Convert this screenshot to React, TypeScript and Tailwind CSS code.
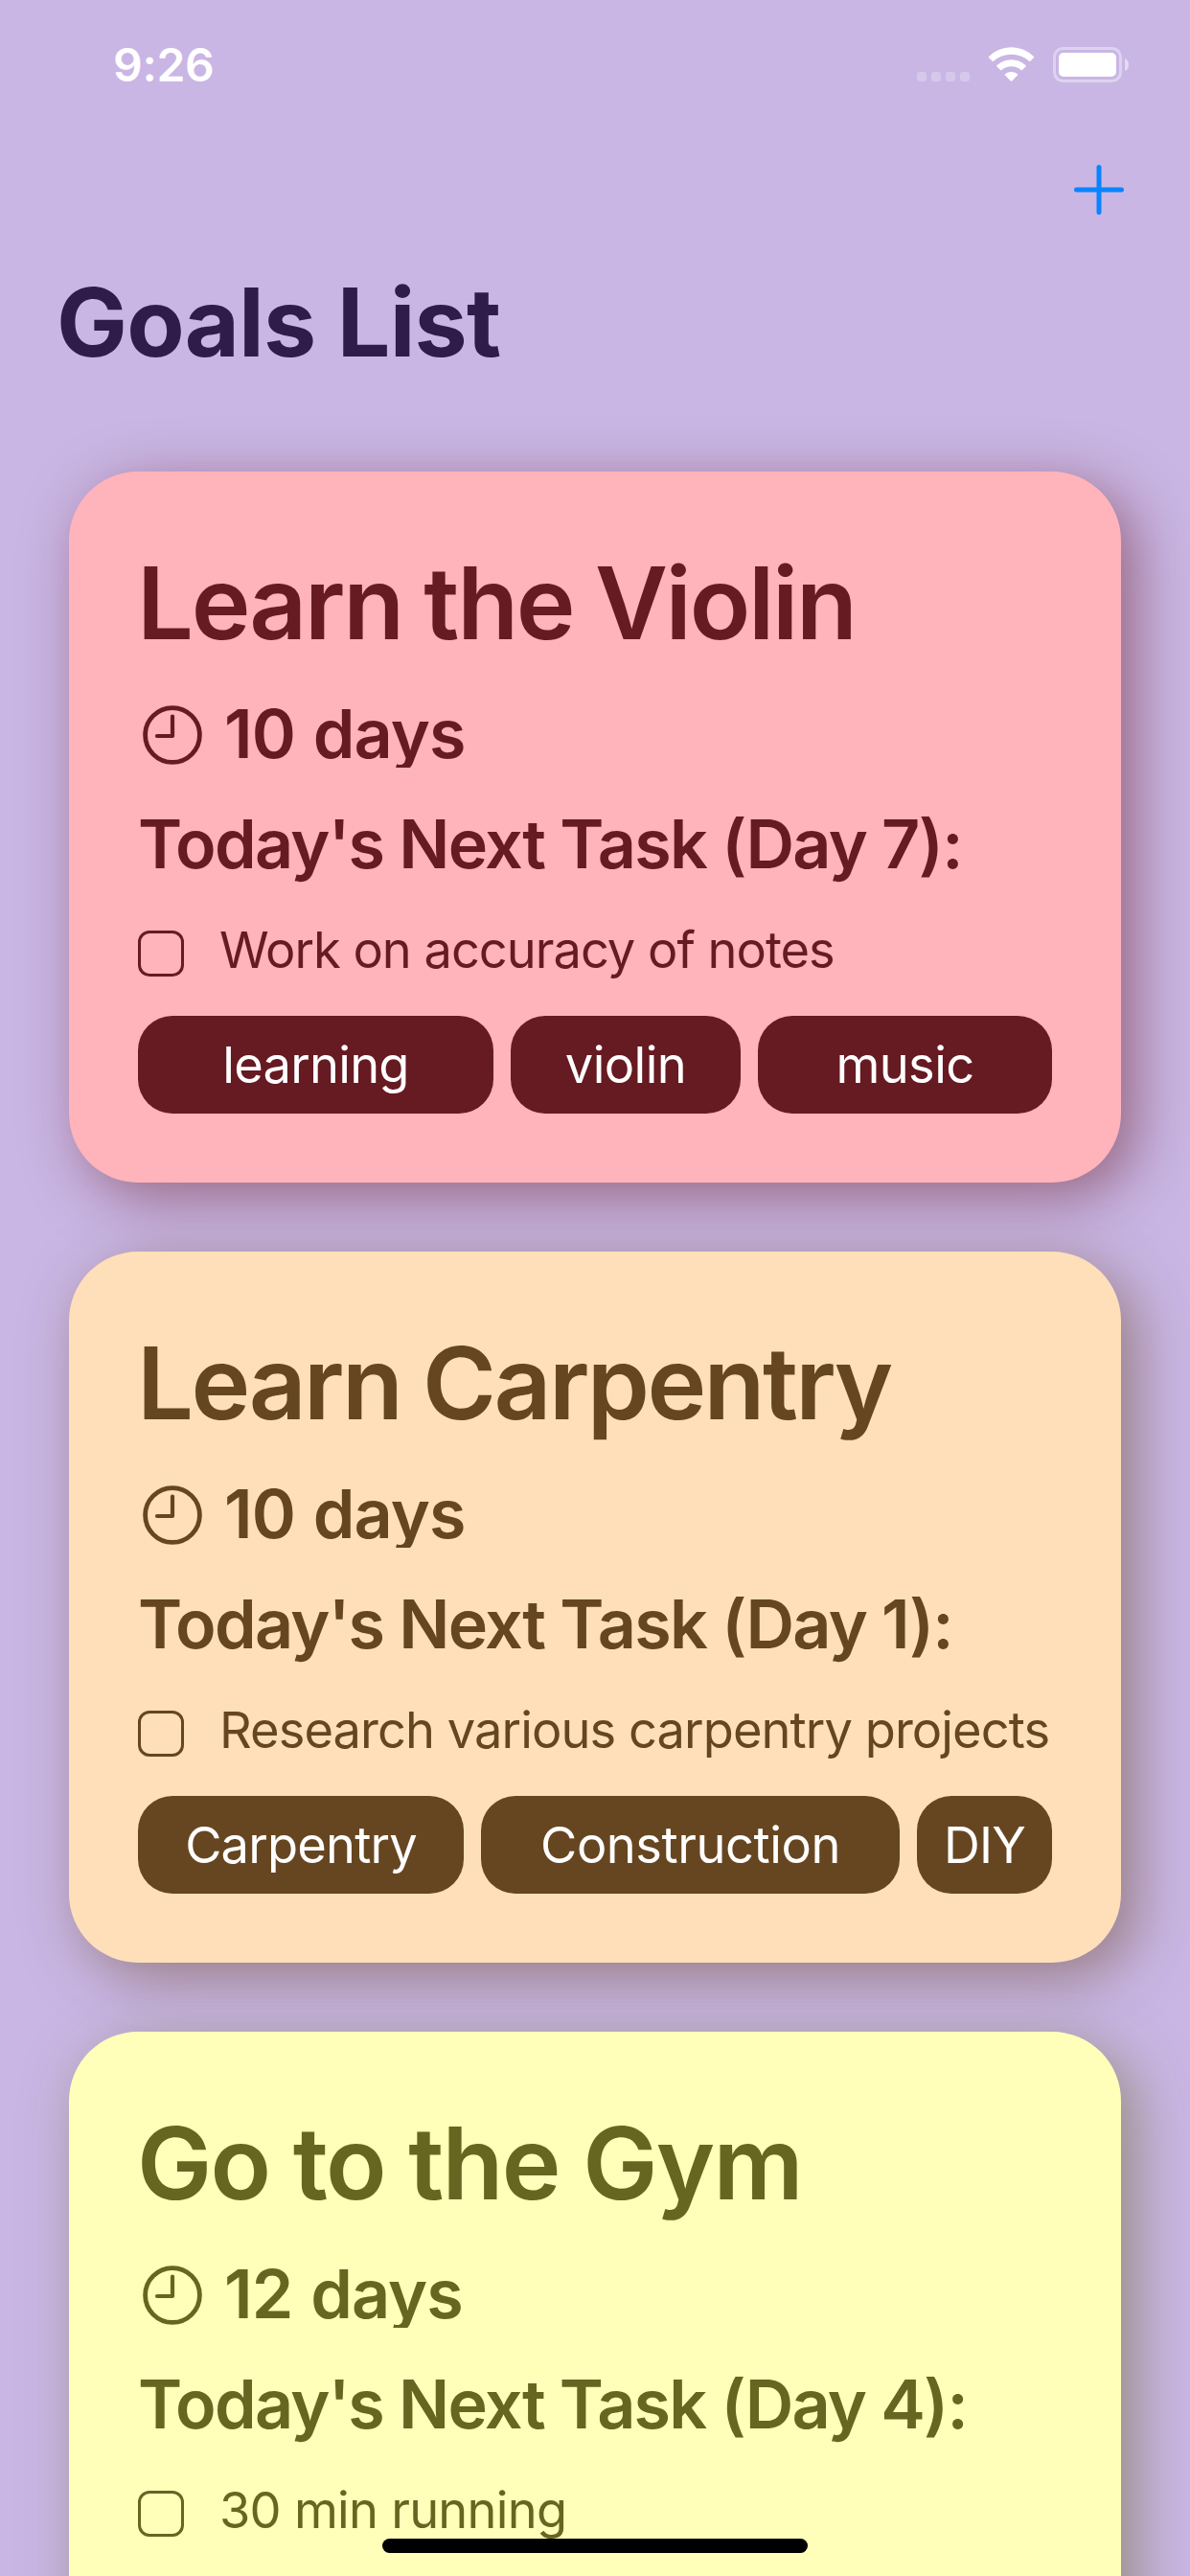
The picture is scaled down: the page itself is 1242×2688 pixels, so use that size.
import React from "react";
import clsx from "clsx";

type Tag = { label: string; className: string };

type Goal = {
  title: string;
  titleClass: string;
  days: string;
  heading: string;
  headingClass: string;
  task: string;
  taskClass: string;
  tags: Tag[];
  cardClass: string;
  tagClass: string;
};

const goals: Goal[] = [
  {
    title: "Learn the Violin",
    titleClass: "tracking-[-2.3px] [word-spacing:-1.5px]",
    days: "10 days",
    heading: "Today's Next Task (Day 7):",
    headingClass: "tracking-[-1.68px]",
    task: "Work on accuracy of notes",
    taskClass: "tracking-[-1px]",
    tags: [
      { label: "learning", className: "w-[371px] tracking-[-0.75px]" },
      { label: "violin", className: "w-[240px] tracking-[-0.6px]" },
      { label: "music", className: "w-[307px] tracking-[-0.6px]" },
    ],
    cardClass: "bg-[#ffb3ba] text-[#661a21] shadow-[15px_15px_60px_#661a2180]",
    tagClass: "bg-[#661a21]",
  },
  {
    title: "Learn Carpentry",
    titleClass: "tracking-[-2.6px] [word-spacing:-1px]",
    days: "10 days",
    heading: "Today's Next Task (Day 1):",
    headingClass: "tracking-[-1.68px]",
    task: "Research various carpentry projects",
    taskClass: "tracking-[-0.92px]",
    tags: [
      { label: "Carpentry", className: "w-[340px] tracking-[-0.8px]" },
      { label: "Construction", className: "w-[437px] tracking-[-0.45px]" },
      { label: "DIY", className: "w-[141px] tracking-[-0.8px]" },
    ],
    cardClass: "bg-[#ffdfba] text-[#664621] shadow-[15px_15px_60px_#66462180]",
    tagClass: "bg-[#664621]",
  },
  {
    title: "Go to the Gym",
    titleClass: "tracking-[-1.8px]",
    days: "12 days",
    heading: "Today's Next Task (Day 4):",
    headingClass: "tracking-[-1.72px]",
    task: "30 min running",
    taskClass: "tracking-[-0.75px]",
    tags: [],
    cardClass: "bg-[#ffffba] text-[#666621] shadow-[15px_15px_60px_#66662180]",
    tagClass: "bg-[#666621]",
  },
];

function StatusIcons() {
  return (
    <svg width="222" height="37" viewBox="0 0 222 37" fill="white">
      <g fillOpacity="0.25">
        <rect x="0" y="26" width="10" height="10" rx="3" />
        <rect x="15" y="26" width="10" height="10" rx="3" />
        <rect x="30" y="26" width="10" height="10" rx="3" />
        <rect x="45" y="26" width="10" height="10" rx="3" />
      </g>
      <g transform="translate(74.7 0)">
        <path d="M.4 9.9A33 33 0 0 1 47.2 9.9Q47.8 10.6 47.2 11.2L43.7 14.8Q43 15.4 42.3 14.8A27.5 27.5 0 0 0 5.3 14.8Q4.6 15.4 3.9 14.8L.4 11.2Q-.2 10.6 .4 9.9Z" />
        <path d="M8.7 19.2A22 22 0 0 1 38.9 19.2Q39.5 19.8 38.9 20.4L35.2 24Q34.5 24.7 33.8 24A15.5 15.5 0 0 0 13.8 24Q13.1 24.7 12.4 24L8.7 20.4Q8.1 19.8 8.7 19.2Z" />
        <path d="M17.3 28.3A10.5 10.5 0 0 1 30.3 28.3Q30.9 28.9 30.3 29.5L24.5 35.5Q23.8 36.2 23.1 35.5L17.3 29.5Q16.7 28.9 17.3 28.3Z" />
      </g>
      <rect x="143.5" y="1.5" width="69" height="34" rx="9" fill="none" stroke="white" strokeOpacity="0.4" strokeWidth="3" />
      <rect x="148" y="6" width="60" height="25" rx="5" />
      <path d="M217 12Q221 13.5 221 18.5T217 25Z" fillOpacity="0.5" />
    </svg>
  );
}

function Clock() {
  return (
    <svg width="62" height="62" viewBox="0 0 62 62" fill="none" stroke="currentColor" className="mt-[19px] ml-[5px] shrink-0">
      <circle cx="31" cy="31" r="28.4" strokeWidth="4.8" />
      <path d="M31 11.5V32H15" strokeWidth="4.2" strokeLinecap="round" strokeLinejoin="round" />
    </svg>
  );
}

function GoalCard({ goal }: { goal: Goal }) {
  return (
    <article className={clsx("h-[742px] shrink-0 rounded-[72px] p-[72px] whitespace-nowrap", goal.cardClass)}>
      <h2 className={clsx("-ml-px text-[104.5px] leading-[130px] font-semibold", goal.titleClass)}>{goal.title}</h2>
      <div className="mt-[23px] flex h-[84px] overflow-hidden">
        <Clock />
        <span className="ml-[23px] text-[70px] leading-[97px] font-semibold tracking-[-0.9px] [word-spacing:2px]">{goal.days}</span>
      </div>
      <h3 className={clsx("mt-9 text-[70px] leading-[87px] font-semibold", goal.headingClass)}>{goal.heading}</h3>
      <div className="mt-[35px] flex h-16 items-start">
        <span className="mt-3 size-12 shrink-0 rounded-xl border-[3px] border-current" />
        <span className={clsx("ml-[37px] text-[52.4px] leading-[64px]", goal.taskClass)}>{goal.task}</span>
      </div>
      <div className="mt-[37px] flex gap-[18px] text-white">
        {goal.tags.map((tag) => (
          <span
            key={tag.label}
            className={clsx("h-[102px] shrink-0 rounded-[36px] text-center text-[52.4px] leading-[102px]", goal.tagClass, tag.className)}
          >
            {tag.label}
          </span>
        ))}
      </div>
    </article>
  );
}

export default function App() {
  return (
    <main className="relative flex h-[2688px] w-[1242px] flex-col overflow-hidden bg-[#c9b6e4] font-['Inter',sans-serif]">
      <div className="flex h-[135px] shrink-0 items-center justify-between pr-[63px] pl-[118px] text-white">
        <span className="text-[48px] font-semibold tracking-[-0.3px]">9:26</span>
        <StatusIcons />
      </div>
      <nav className="flex h-[125px] shrink-0 items-center justify-end pr-[68px]">
        <button aria-label="Add goal" className="text-[#0a84ff]">
          <svg width="54" height="54" viewBox="0 0 54 54" stroke="currentColor" strokeWidth="5" strokeLinecap="round">
            <path d="M27 3.5V50.5M3.5 27H50.5" />
          </svg>
        </button>
      </nav>
      <h1 className="shrink-0 pl-[59px] text-[98.6px] leading-[152px] font-bold tracking-[-0.85px] text-[#301c4a]">Goals List</h1>
      <section className="mt-20 flex flex-col gap-[72px] px-[72px]">
        {goals.map((goal) => (
          <GoalCard key={goal.title} goal={goal} />
        ))}
      </section>
      <div className="absolute bottom-6 left-1/2 h-[15px] w-[444px] -translate-x-1/2 rounded-full bg-black" />
    </main>
  );
}
